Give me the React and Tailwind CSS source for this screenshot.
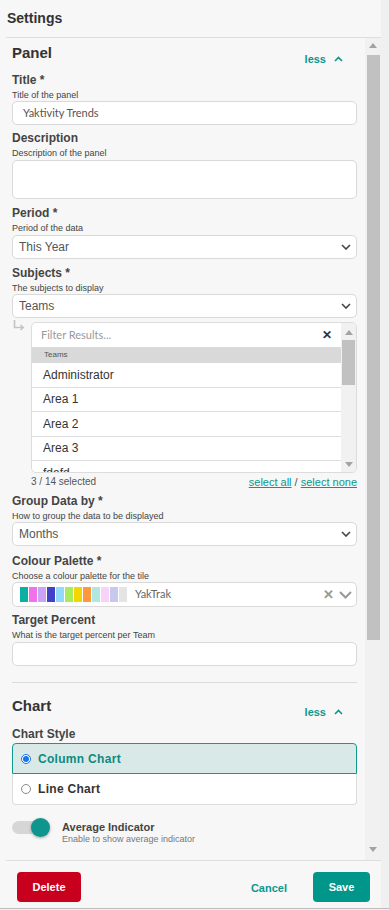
import React from 'react';

const palette = ['#0bb0a2', '#f171ea', '#c9a3f4', '#4242c9', '#91daf9', '#a8eb5d', '#f3d500', '#ff973f', '#b1e7e3', '#f8d3f7', '#c8c7ee', '#e4e4e4'];
const teams = ['Administrator', 'Area 1', 'Area 2', 'Area 3', 'fdafd'];

const ChevronDown = ({ className = '' }) => (
    <svg width="10" height="6" viewBox="0 0 10 6" className={className}>
        <path d="M1 1l4 4 4-4" fill="none" stroke="currentColor" strokeWidth="1.6" />
    </svg>
);

const Less = () => (
    <div className="mt-[9px] mr-[14px] flex items-center gap-[8px] text-[11px] font-bold leading-[12px] text-[#0e968e]">
        less
        <svg width="9" height="6" viewBox="0 0 9 6">
            <path d="M1 5l3.5-3.5L8 5" fill="none" stroke="currentColor" strokeWidth="1.6" />
        </svg>
    </div>
);

const Field = ({ label, sub, className = '', children }) => (
    <div className={className}>
        <div className="text-[12px] font-bold leading-[14px] text-[#444]">{label}</div>
        <div className="mt-[3px] text-[9px] leading-[11px] text-[#444]">{sub}</div>
        {children}
    </div>
);

const Select = ({ value }) => (
    <div className="flex h-[24px] items-center justify-between rounded-[5px] border border-[#d9d9d9] bg-white pl-[6px] pr-[5px] text-[12px] text-[#555]">
        <span>{value}</span>
        <ChevronDown className="text-[#444]" />
    </div>
);

const Tri = ({ down }) => (
    <svg width="8" height="5" viewBox="0 0 8 5">
        <path d={down ? 'M0 0h8L4 5z' : 'M0 5h8L4 0z'} fill="#a3a3a3" />
    </svg>
);

const App = () => {
    return (
        <div className="flex h-[910px] w-[389px] flex-col bg-[#f0f0f0] font-['Liberation_Sans',Arial,sans-serif]">
            <div className="flex h-[908px]">
                <div className="flex w-[381px] flex-col bg-[#f7f7f7] pl-[6px]">
                    {/* header */}
                    <div className="flex h-[38px] items-center border-b border-[#dedede] pl-[1px] text-[14px] font-bold text-[#333]">
                        Settings
                    </div>

                    {/* body */}
                    <div className="flex h-[822px]">
                        <div className="min-w-0 flex-1 overflow-hidden pl-[6px] pr-[8px] pt-[6px]">
                            <div className="flex items-start justify-between">
                                <div className="text-[15px] font-bold leading-[18px] text-[#333]">Panel</div>
                                <Less />
                            </div>

                            <Field label="Title *" sub="Title of the panel" className="mt-[8px]">
                                <div className="flex h-[24px] items-center rounded-[5px] border border-[#d9d9d9] bg-white pl-[10px] font-['Lato',sans-serif] text-[11px] text-[#555]">
                                    Yaktivity Trends
                                </div>
                            </Field>

                            <Field label="Description" sub="Description of the panel" className="mt-[6px]">
                                <div className="mt-[1px] h-[39px] rounded-[5px] border border-[#d9d9d9] bg-white" />
                            </Field>

                            <Field label="Period *" sub="Period of the data" className="mt-[7px]">
                                <div className="mt-[1px]"><Select value="This Year" /></div>
                            </Field>

                            <Field label="Subjects *" sub="The subjects to display" className="mt-[7px]">
                                <Select value="Teams" />
                            </Field>

                            {/* subject picker */}
                            <div className="mt-[4px] flex">
                                <div className="-mt-[2px] w-[19px] pl-[1px]">
                                    <svg width="12" height="11" viewBox="0 0 12 11">
                                        <path d="M1.5 0V7.5H10" fill="none" stroke="#c4c4c4" strokeWidth="1.6" />
                                        <path d="M7.5 5l2.8 2.5-2.8 2.5" fill="none" stroke="#c4c4c4" strokeWidth="1.6" />
                                    </svg>
                                </div>
                                <div className="flex h-[151px] flex-1 overflow-hidden rounded-[5px] border border-[#dcdcdc] bg-white">
                                    <div className="min-w-0 flex-1">
                                        <div className="flex h-[24px] items-center justify-between pl-[9px] pr-[9px]">
                                            <span className="font-['Lato',sans-serif] text-[11px] text-[#9a9a9a]">Filter Results...</span>
                                            <span className="text-[12px] font-bold text-[#333]">✕</span>
                                        </div>
                                        <div className="h-[16px] bg-[#d9d9d9] pl-[12px] text-[8px] leading-[16px] text-[#555]">Teams</div>
                                        {teams.map((team) => (
                                            <div key={team} className="flex h-[24.5px] shrink-0 items-center border-b border-[#dedede] pl-[11px] text-[12px] text-[#333]">
                                                {team}
                                            </div>
                                        ))}
                                    </div>
                                    <div className="flex w-[15px] flex-col items-center bg-[#f1f1f1] pb-[5px] pt-[7px]">
                                        <Tri />
                                        <div className="mt-[5px] h-[45px] w-[13px] bg-[#c1c1c1]" />
                                        <div className="flex-1" />
                                        <Tri down />
                                    </div>
                                </div>
                            </div>
                            <div className="mt-[3px] flex items-center justify-between pl-[19px]">
                                <span className="text-[10px] leading-[12px] text-[#555]">3 / 14 selected</span>
                                <span className="text-[11px] leading-[12px] text-[#555]">
                                    <span className="text-[#0e968e] underline">select all</span> / <span className="text-[#0e968e] underline">select none</span>
                                </span>
                            </div>

                            <Field label="Group Data by *" sub="How to group the data to be displayed" className="mt-[6px]">
                                <Select value="Months" />
                            </Field>

                            <Field label="Colour Palette *" sub="Choose a colour palette for the tile" className="mt-[8px]">
                                <div className="flex h-[25px] items-center rounded-[5px] border border-[#d9d9d9] bg-white pl-[7px] pr-[4px]">
                                    <div className="flex gap-[1px]">
                                        {palette.map((c) => (
                                            <div key={c} className="h-[15px] w-[8px]" style={{ backgroundColor: c }} />
                                        ))}
                                    </div>
                                    <span className="ml-[8px] flex-1 font-['Lato',sans-serif] text-[11px] text-[#666]">YakTrak</span>
                                    <span className="text-[13px] font-bold text-[#999]">✕</span>
                                    <svg width="13" height="8" viewBox="0 0 13 8" className="ml-[5px]">
                                        <path d="M1 1l5.5 5.5L12 1" fill="none" stroke="#999" strokeWidth="2" />
                                    </svg>
                                </div>
                            </Field>

                            <Field label="Target Percent" sub="What is the target percent per Team" className="mt-[6px]">
                                <div className="mt-[1px] h-[24px] rounded-[5px] border border-[#d9d9d9] bg-white" />
                            </Field>

                            <div className="mt-[16px] border-t border-[#dcdcdc]" />

                            <div className="mt-[14px] flex items-start justify-between">
                                <div className="text-[15px] font-bold leading-[18px] text-[#333]">Chart</div>
                                <Less />
                            </div>

                            <div className="mt-[9px] text-[12px] font-bold leading-[14px] text-[#444]">Chart Style</div>
                            <div className="mt-[2px] flex flex-col">
                                <div className="flex h-[31px] items-center gap-[7px] rounded-t-[4px] border border-[#129a90] bg-[#d9e9e7] pl-[8px]">
                                    <span className="flex h-[10px] w-[10px] items-center justify-center rounded-full border border-[#1a73f0] bg-white">
                                        <span className="h-[6px] w-[6px] rounded-full bg-[#1a73f0]" />
                                    </span>
                                    <span className="text-[12px] font-bold tracking-[0.3px] text-[#0e8a82]">Column Chart</span>
                                </div>
                                <div className="flex h-[31px] items-center gap-[7px] rounded-b-[4px] border-x border-b border-[#dcdcdc] bg-white pl-[8px]">
                                    <span className="h-[10px] w-[10px] rounded-full border border-[#8a8a8a] bg-white" />
                                    <span className="text-[12px] font-bold tracking-[0.3px] text-[#333]">Line Chart</span>
                                </div>
                            </div>

                            <div className="mt-[13px] flex items-start gap-[12px]">
                                <div className="relative h-[19px] w-[38px]">
                                    <div className="absolute left-0 top-[3px] h-[13px] w-[34px] rounded-full bg-[#d6d6d6]" />
                                    <div className="absolute right-0 top-0 h-[19px] w-[19px] rounded-full bg-[#0e968e] shadow-[0_1px_3px_rgba(0,0,0,0.35)]" />
                                </div>
                                <div className="mt-[3px]">
                                    <div className="text-[11px] font-bold leading-[13px] text-[#444]">Average Indicator</div>
                                    <div className="text-[9px] leading-[11px] text-[#777]">Enable to show average indicator</div>
                                </div>
                            </div>
                        </div>

                        {/* scrollbar */}
                        <div className="flex w-[16px] flex-col items-center bg-[#f1f1f1] pb-[8px] pt-[5px]">
                            <Tri />
                            <div className="mt-[7px] h-[585px] w-[13px] bg-[#c1c1c1]" />
                            <div className="flex-1" />
                            <Tri down />
                        </div>
                    </div>

                    {/* footer */}
                    <div className="flex flex-1 items-start border-t border-[#dedede] pl-[11px] pr-[11px] pt-[11px]">
                        <button className="h-[30px] w-[64px] rounded-[4px] bg-[#c8001e] text-[11px] font-bold text-white">Delete</button>
                        <div className="flex-1" />
                        <button className="mr-[26px] mt-[8px] text-[11px] font-bold text-[#0e968e]">Cancel</button>
                        <button className="h-[30px] w-[57px] rounded-[4px] bg-[#00968a] text-[11px] font-bold text-white">Save</button>
                    </div>
                </div>
            </div>
            <div className="h-[1px] bg-[#bdbdbd]" />
            <div className="h-[1px] bg-[#f0f0f0]" />
        </div>
    );
};

export default App;
